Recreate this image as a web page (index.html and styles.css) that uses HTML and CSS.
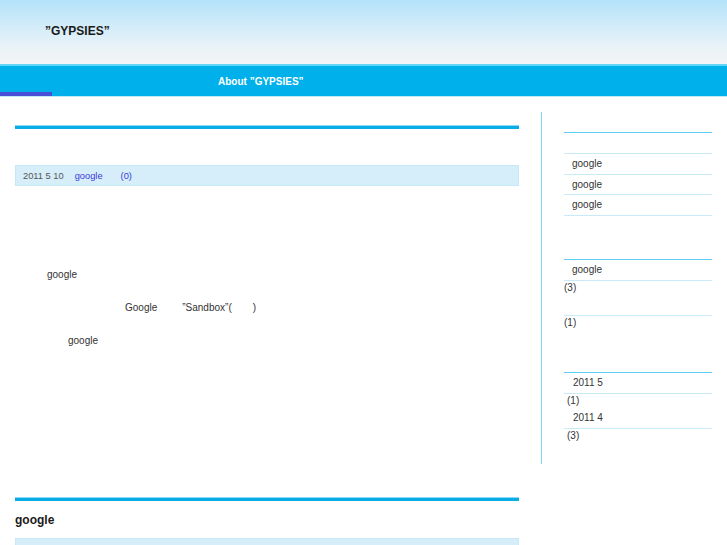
FILE: index.html
```html
<!DOCTYPE html>
<html lang="ja">
<head>
<meta charset="utf-8">
<title>”GYPSIES”</title>
<link rel="stylesheet" href="styles.css">
</head>
<body>
<header class="site-header">
  <h1 class="site-title">”GYPSIES”</h1>
</header>
<nav class="global-nav">
  <ul class="nav-list">
    <li class="nav-item nav-home"></li>
    <li class="nav-item nav-about">About ”GYPSIES”</li>
  </ul>
</nav>
<div class="container">
  <main class="main">
    <article class="post">
      <h2 class="post-title"></h2>
      <div class="post-meta">
        <span class="meta-date">2011 5 10</span><a class="meta-link meta-cat">google</a><a class="meta-link meta-comments">(0)</a>
      </div>
      <div class="post-body">
        <div class="line ind-1">google</div>
        <div class="line ind-2">Google<span class="word-gap"></span>”Sandbox”(<span class="paren-gap"></span>)</div>
        <div class="line ind-3">google</div>
      </div>
    </article>
    <article class="post">
      <h2 class="post-title">google</h2>
      <div class="post-meta">
        <span class="meta-date">2011 5 8</span><a class="meta-link meta-cat">google</a><a class="meta-link meta-comments">(0)</a>
      </div>
    </article>
  </main>
  <aside class="sidebar">
    <section class="widget widget-recent">
      <h3 class="widget-title"></h3>
      <ul class="widget-list spaced">
        <li class="widget-link">google</li>
        <li class="widget-link">google</li>
        <li class="widget-link">google</li>
      </ul>
    </section>
    <section class="widget">
      <h3 class="widget-title"></h3>
      <ul class="widget-list">
        <li><div class="widget-link">google</div><div class="count">(3)</div></li>
        <li><div class="widget-link"></div><div class="count">(1)</div></li>
      </ul>
    </section>
    <section class="widget">
      <h3 class="widget-title"></h3>
      <ul class="widget-list">
        <li><div class="widget-link arch">2011 5</div><div class="count arch-count">(1)</div></li>
        <li><div class="widget-link arch">2011 4</div><div class="count arch-count">(3)</div></li>
      </ul>
    </section>
  </aside>
</div>
</body>
</html>
```
FILE: styles.css
```css
* { box-sizing: border-box; }
html, body { margin: 0; padding: 0; }
body {
  font-family: "Liberation Sans", Arial, sans-serif;
  font-size: 10px;
  color: #333;
  background: #fff;
}
ul { list-style: none; margin: 0; padding: 0; }
h1, h2, h3 { margin: 0; }
a { text-decoration: none; }

.site-header {
  height: 64px;
  background: linear-gradient(to bottom, #b4e2f9 0%, #d2ecf9 40%, #eaf3f7 75%, #f2f4f5 100%);
}
.site-title {
  padding-left: 45px;
  line-height: 62px;
  font-size: 12px;
  font-weight: bold;
  color: #1a1a1a;
}

.global-nav {
  border-top: 2px solid #62d5f7;
  border-bottom: 1px solid #bde9fa;
  background: #00b0ea;
}
.nav-list { display: flex; height: 30px; }
.nav-item {
  height: 30px;
  line-height: 31px;
  color: #fff;
  font-weight: bold;
  font-size: 10px;
}
.nav-home { width: 52px; border-bottom: 4px solid #4a4fd8; }
.nav-about { padding-left: 166px; }

.container {
  display: flex;
  align-items: flex-start;
  padding: 15px 0 0 15px;
}
.main { width: 504px; margin-right: 22px; padding-top: 14px; flex-shrink: 0; }
.post { border-top: 3px solid #08ade8; box-shadow: 0 -1px 0 #8ad9f6; }
.post + .post { margin-top: 141px; }
.post-title {
  height: 36px;
  line-height: 39px;
  font-size: 12px;
  font-weight: bold;
  color: #1a1a1a;
}
.post + .post .post-title { height: 37px; }
.post-meta {
  height: 21px;
  line-height: 20px;
  padding-left: 7px;
  background: #d6eefa;
  border: 1px solid #c6e9f9;
  font-size: 9.3px;
}
.meta-date { color: #555; }
.meta-link { color: #3a3ad8; }
.meta-cat { margin-left: 11px; }
.meta-comments { margin-left: 18px; }

.post-body { padding-top: 72px; }
.line { line-height: 33px; }
.ind-1 { padding-left: 32px; }
.ind-2 { padding-left: 110px; }
.ind-3 { padding-left: 53px; }
.word-gap { display: inline-block; width: 25px; }
.paren-gap { display: inline-block; width: 21px; }

.sidebar {
  width: 186px;
  flex-shrink: 0;
  border-left: 1px solid #80d5f7;
  padding: 0 15px 21px 22px;
}
.widget + .widget { margin-top: 22px; }
.widget-recent { padding-bottom: 1px; }
.widget-title { height: 21px; border-bottom: 1px solid #5ccdf4; }
.widget-list.spaced { margin-top: 20px; border-top: 1px solid #c9ebf9; }
.widget-link {
  height: 21px;
  line-height: 20px;
  padding-left: 8px;
  border-bottom: 1px solid #c9ebf9;
  color: #333;
}
.spaced .widget-link { height: 20.6px; line-height: 19.6px; }
.widget-link.arch { padding-left: 9px; }
.count { line-height: 14px; color: #333; }
.arch-count { padding-left: 3px; }
```
